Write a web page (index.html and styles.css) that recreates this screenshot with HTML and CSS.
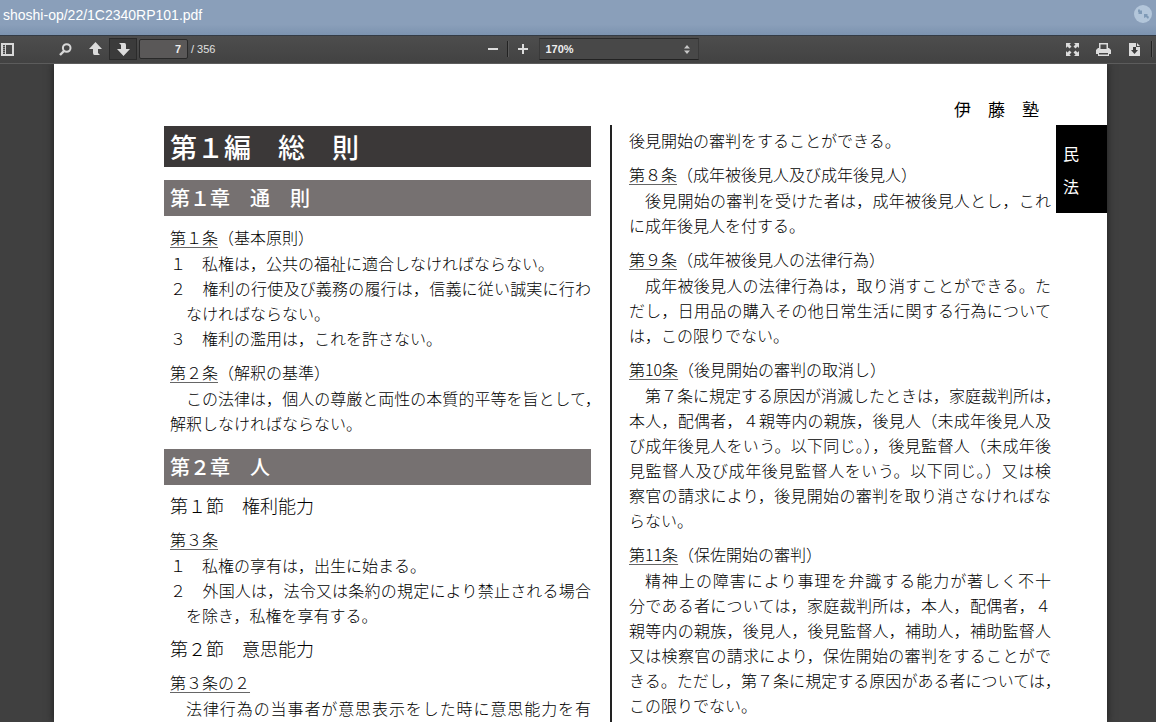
FILE: index.html
```html
<!DOCTYPE html>
<html lang="ja">
<head>
    <meta charset="UTF-8">
    <title>shoshi-op/22/1C2340RP101.pdf</title>
    <link rel="stylesheet" href="styles.css">
</head>
<body>
<header class="titlebar">
    <span>shoshi-op/22/1C2340RP101.pdf</span>
    <button class="restore" aria-label="縮小">
        <svg width="18" height="18" viewBox="0 0 18 18">
            <circle cx="9" cy="9" r="9" fill="#b3c6da"/>
            <path d="M4 5l1-1 2 2 1-1v4H4l1-1-1-1z" fill="#7f9ab6"/>
            <path d="M10 9h4l-1 1 2 2-1 2-2-2-2 1z" fill="#7f9ab6"/>
        </svg>
    </button>
</header>
<div class="toolbar">
    <div class="tools">
        <button class="tool side" aria-label="サイドバー">
            <svg width="13" height="13" viewBox="0 0 13 13">
                <path d="M1 1h11v11H1z" fill="none" stroke="#d8d8d8" stroke-width="2"/>
                <path d="M4.500 1v11" stroke="#d8d8d8"/>
                <path d="M2 3.500h2M2 5.500h2M2 7.500h2M2 9.500h2" stroke="#888"/>
            </svg>
        </button>
        <button class="tool find" aria-label="検索">
            <svg width="13" height="13" viewBox="0 0 13 13">
                <circle cx="7.700" cy="5" r="3.800" fill="none" stroke="#d8d8d8" stroke-width="2"/>
                <path d="M5 8l-4 4" stroke="#d8d8d8" stroke-width="2.400"/>
            </svg>
        </button>
        <button class="tool" aria-label="前のページ">
            <svg width="13" height="14" viewBox="0 0 13 14">
                <path d="M6.500 0L13 7H9v4l2 2H5.500Q4 13 4 11V7H0z" fill="#dcdcdc"/>
            </svg>
        </button>
        <button class="tool pressed" aria-label="次のページ">
            <svg width="13" height="14" viewBox="0 0 13 14">
                <path d="M2 1h5.500Q9 1 9 3v4h4l-6.500 7L0 7h4V3z" fill="#dcdcdc"/>
            </svg>
        </button>
        <input class="page-number" type="text" value="7" aria-label="ページ">
        <span class="page-total">/ 356</span>
    </div>
    <div class="tools">
        <button class="tool" aria-label="縮小表示">
            <svg width="10" height="10" viewBox="0 0 10 10"><path d="M0 5h10" stroke="#dcdcdc" stroke-width="2"/></svg>
        </button>
        <span class="separator"></span>
        <button class="tool" aria-label="拡大表示">
            <svg width="10" height="10" viewBox="0 0 10 10"><path d="M0 5h10M5 0v10" stroke="#dcdcdc" stroke-width="2"/></svg>
        </button>
        <div class="zoom">
            <select aria-label="倍率">
                <option>170%</option>
            </select>
            <svg width="6" height="9" viewBox="0 0 6 9"><path d="M3 0l3 3.500H0zM3 9L0 5.500h6z" fill="#c8c8c8"/></svg>
        </div>
    </div>
    <div class="tools tools-right">
        <button class="tool" aria-label="全画面">
            <svg width="13" height="13" viewBox="0 0 13 13">
                <path d="M0 0h5L3.500 1.500 5.500 3.500l-2 2-2-2L0 5zM13 0v5l-1.500-1.500-2 2-2-2 2-2L8 0zM0 13V8l1.500 1.500 2-2 2 2-2 2L5 13zM13 13H8l1.500-1.500-2-2 2-2 2 2L13 8z" fill="#dcdcdc"/>
            </svg>
        </button>
        <button class="tool" aria-label="印刷">
            <svg width="15" height="13" viewBox="0 0 15 13">
                <path d="M3 0h9v5h1l2 2v4h-2v2H2v-2H0V7l2-2h1zM4.500 1.500V6h6V1.500zM3 10v1.500h9V10z" fill="#dcdcdc" fill-rule="evenodd"/>
            </svg>
        </button>
        <button class="tool" aria-label="ダウンロード">
            <svg width="11" height="13" viewBox="0 0 11 13">
                <path d="M0 0h7v4h4v9H0z M8 0l3 3H8z" fill="#dcdcdc"/>
                <path d="M4 4h3v3h2l-3.500 4L2 7h2z" fill="#3c3c3c"/>
            </svg>
        </button>
        <span class="separator"></span>
    </div>
</div>
<main class="viewer">
    <div class="page">
        <div class="page-head">伊　藤　塾</div>
        <div class="sheet">
            <section class="column left">
                <h1 class="part">第１編　総　則</h1>
                <h2 class="chapter">第１章　通　則</h2>
                <h4 class="article"><u>第１条</u>（基本原則）</h4>
                <p><span>１　私権は，公共の福祉に適合しなければならない。</span></p>
                <p><span>２　権利の行使及び義務の履行は，信義に従い誠実に行わ</span><span class="indent">なければならない。</span></p>
                <p><span>３　権利の濫用は，これを許さない。</span></p>
                <h4 class="article"><u>第２条</u>（解釈の基準）</h4>
                <p><span class="indent hang">この法律は，個人の尊厳と両性の本質的平等を旨として，</span><span>解釈しなければならない。</span></p>
                <h2 class="chapter">第２章　人</h2>
                <h3 class="part-section">第１節　権利能力</h3>
                <h4 class="article"><u>第３条</u></h4>
                <p><span>１　私権の享有は，出生に始まる。</span></p>
                <p><span>２　外国人は，法令又は条約の規定により禁止される場合</span><span class="indent">を除き，私権を享有する。</span></p>
                <h3 class="part-section">第２節　意思能力</h3>
                <h4 class="article"><u>第３条の２</u></h4>
                <p class="continued"><span class="indent">法律行為の当事者が意思表示をした時に意思能力を有</span></p>
            </section>
            <section class="column right">
                <p><span>後見開始の審判をすることができる。</span></p>
                <h4 class="article"><u>第８条</u>（成年被後見人及び成年後見人）</h4>
                <p><span class="indent">後見開始の審判を受けた者は，成年被後見人とし，これ</span><span>に成年後見人を付する。</span></p>
                <h4 class="article"><u>第９条</u>（成年被後見人の法律行為）</h4>
                <p><span class="indent">成年被後見人の法律行為は，取り消すことができる。た</span><span>だし，日用品の購入その他日常生活に関する行為について</span><span>は，この限りでない。</span></p>
                <h4 class="article"><u>第10条</u>（後見開始の審判の取消し）</h4>
                <p><span class="indent hang">第７条に規定する原因が消滅したときは，家庭裁判所は，</span><span>本人，配偶者，４親等内の親族，後見人（未成年後見人及</span><span>び成年後見人をいう。以下同じ。），後見監督人（未成年後</span><span>見監督人及び成年後見監督人をいう。以下同じ。）又は検</span><span>察官の請求により，後見開始の審判を取り消さなければな</span><span>らない。</span></p>
                <h4 class="article"><u>第11条</u>（保佐開始の審判）</h4>
                <p><span class="indent">精神上の障害により事理を弁識する能力が著しく不十</span><span>分である者については，家庭裁判所は，本人，配偶者，４</span><span>親等内の親族，後見人，後見監督人，補助人，補助監督人</span><span>又は検察官の請求により，保佐開始の審判をすることがで</span><span class="hang">きる。ただし，第７条に規定する原因がある者については，</span><span>この限りでない。</span></p>
            </section>
            <aside class="index-tab"><span>民</span><span>法</span></aside>
        </div>
    </div>
</main>
</body>
</html>
```
FILE: styles.css
```css
html, body{
    height: 100%;
}
body{
    display: flex;
    flex-direction: column;
    margin: 0;
    overflow: hidden;
    background-color: #404040;
    font-family: "Liberation Sans", "Noto Sans CJK JP", sans-serif;
}
h1, h2, h3, h4, p{
    margin: 0;
}
button, input, select{
    margin: 0;
    padding: 0;
    border: 0;
    background: none;
    font-family: inherit;
}
svg{
    display: block;
    flex: none;
}
.titlebar{
    display: flex;
    flex: none;
    justify-content: space-between;
    box-sizing: border-box;
    height: 35px;
    padding: 5px 4px 0 3px;
    background: linear-gradient(#8a9fba 70%, #7c93af);
    color: #fff;
    font-size: 14px;
    line-height: 20px;
}
.restore{
    height: 18px;
}
.toolbar{
    position: relative;
    display: grid;
    flex: none;
    grid-template-columns: 21fr auto 20fr;
    box-sizing: border-box;
    height: 29px;
    padding-bottom: 1px;
    border-top: 1px solid #333b45;
    border-bottom: 1px solid #5c5c5c;
    background: linear-gradient(#4d4d4d, #424242);
    color: #e0e0e0;
    font-size: 11px;
}
.tools{
    display: flex;
    align-items: center;
}
.tools-right{
    justify-content: flex-end;
    gap: 3px;
    padding-right: 3px;
}
.tool{
    display: flex;
    align-items: center;
    justify-content: center;
    box-sizing: border-box;
    width: 28px;
    height: 22px;
    border: 1px solid transparent;
}
.side{
    width: 15px;
}
.find{
    margin: 0 2px 0 36px;
}
.pressed{
    border-color: #2b2b2b;
    background-color: #3b3b3b;
}
.page-number{
    box-sizing: border-box;
    width: 49px;
    height: 20px;
    margin: 0 3px 0 2px;
    padding-right: 6px;
    border: 1px solid #292929;
    border-radius: 2px;
    background-color: #5a5858;
    color: #eee;
    font-size: 11px;
    font-weight: bold;
    text-align: right;
}
.separator{
    width: 1px;
    height: 16px;
    border-right: 1px solid #5a5a5a;
    background-color: #222;
}
.zoom{
    display: flex;
    align-items: center;
    box-sizing: border-box;
    width: 160px;
    height: 22px;
    margin-left: 2px;
    padding-right: 8px;
    border: 1px solid #3a3a3a;
    border-top-color: #2a2a2a;
    border-bottom-color: #222;
    background-color: #484848;
}
.zoom select{
    flex: 1;
    height: 20px;
    padding-left: 5px;
    appearance: none;
    color: #eee;
    font-size: 11px;
    font-weight: bold;
}
.viewer{
    flex: 1;
    min-height: 0;
    padding: 0 49px 0 54px;
    overflow: hidden;
}
.page{
    display: flex;
    flex-direction: column;
    min-height: 100%;
    background-color: #fff;
    box-shadow: 0 0 8px #1c1c1c;
    color: #000;
    font-family: "Noto Sans CJK JP", sans-serif;
    font-size: 16px;
}
.page-head{
    padding: 32px 68px 3px 0;
    font-size: 17px;
    line-height: 26px;
    text-align: right;
}
.sheet{
    display: grid;
    flex: 1;
    grid-template-columns: 1fr 1fr 51px;
    padding-left: 110px;
}
.left{
    padding: 1px 19px 0 0;
}
.right{
    padding: 3px 5px 0 17px;
    border-left: 2px solid #222;
}
.column p{
    font-weight: 300;
    line-height: 25px;
}
.column p span{
    display: block;
    text-align: justify;
    text-align-last: justify;
    white-space: nowrap;
}
.column p span:last-child{
    text-align-last: left;
}
/* the sentence runs on below the fold */
.column .continued span:last-child{
    text-align-last: justify;
}
.left p,
.left .article,
.part-section{
    margin-left: 6px;
}
.column .indent{
    padding-left: 16px;
}
.column .hang{
    margin-right: -10px;
}
.article{
    margin-top: 8px;
    font-size: 16px;
    font-weight: 300;
    line-height: 27px;
}
.article u{
    text-decoration: underline 1px #666;
    text-underline-offset: 3px;
}
.part,
.chapter{
    padding-left: 6px;
    color: #fff;
    font-weight: 500;
}
.part{
    background-color: #3b3838;
    font-size: 27px;
    line-height: 41px;
}
.chapter{
    margin-top: 13px;
    background-color: #767171;
    font-size: 20px;
    line-height: 36px;
}
.part-section{
    margin-top: 8px;
    font-size: 18px;
    font-weight: 300;
    line-height: 25px;
}
.index-tab{
    align-self: start;
    padding: 12px 7px 10px;
    background-color: #000;
    color: #fff;
    line-height: 33px;
}
.index-tab span{
    display: block;
}
```
